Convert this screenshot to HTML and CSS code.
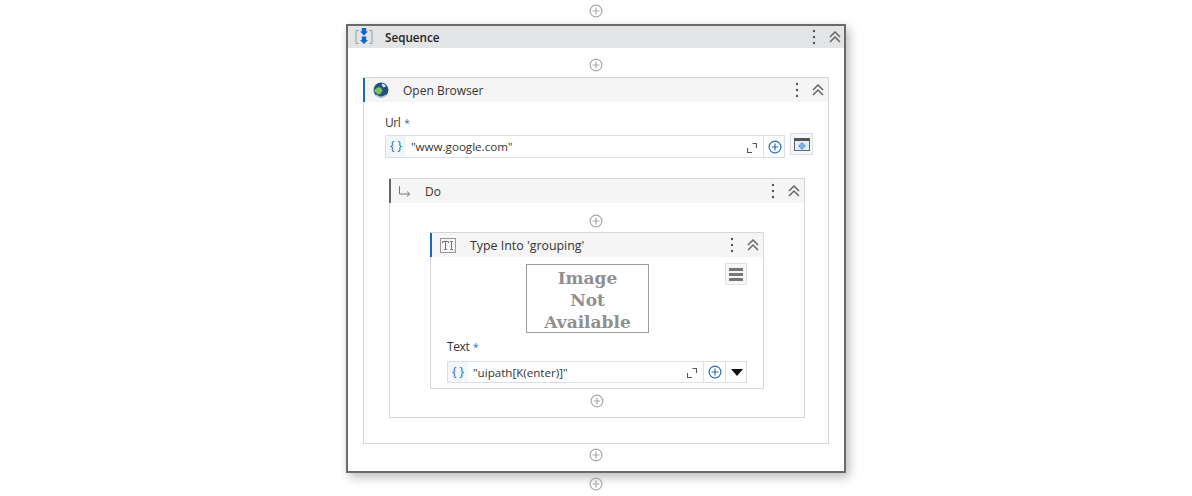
FILE: index.html
```html
<!DOCTYPE html>
<html lang="en">
<head>
    <meta charset="UTF-8">
    <meta name="viewport" content="width=device-width, initial-scale=1.0">
    <title>Sequence</title>
    <link rel="stylesheet" href="styles.css">
</head>
<body>
    <svg class="defs" width="0" height="0">
        <symbol id="add" viewBox="0 0 14 14">
            <circle cx="7" cy="7" r="5.9" fill="none" stroke="currentColor" stroke-width="1.2"/>
            <path d="M7 3.6v6.8M3.6 7h6.8" fill="none" stroke="currentColor" stroke-width="1.2"/>
        </symbol>
        <symbol id="dots" viewBox="0 0 4 16">
            <circle cx="2" cy="2" r="1.2" fill="currentColor"/>
            <circle cx="2" cy="8" r="1.2" fill="currentColor"/>
            <circle cx="2" cy="14" r="1.2" fill="currentColor"/>
        </symbol>
        <symbol id="collapse" viewBox="0 0 12 12">
            <path d="M1 6l5-5 5 5M1 11l5-5 5 5" fill="none" stroke="currentColor" stroke-width="1.5"/>
        </symbol>
        <symbol id="expand" viewBox="0 0 10 10">
            <path d="M.5 5v4.500H5M5.500 .5h4V5" fill="none" stroke="currentColor" stroke-width="1.100"/>
        </symbol>
    </svg>

    <div class="canvas">
        <svg class="add"><use href="#add"/></svg>

        <div class="sequence">
            <div class="head head-seq">
                <svg class="icon" width="18" height="18" viewBox="0 0 18 18">
                    <path d="M3.500 2.500H1v13h2.500M14.500 2.500H17v13h-2.500" fill="none" stroke="#999" stroke-width="1"/>
                    <path d="M6.800 0h4.400v3.500H13L9 7.500 5 3.500h1.800z" fill="#0f66c4"/>
                    <path d="M6.800 8.500h4.400V12H13l-4 4-4-4h1.800z" fill="#0f66c4"/>
                </svg>
                <b class="title">Sequence</b>
                <svg class="dots"><use href="#dots"/></svg>
                <svg class="chevrons"><use href="#collapse"/></svg>
            </div>
            <div class="seq-body">
                <svg class="add add-seq"><use href="#add"/></svg>

                <div class="activity blue">
                    <div class="head head-open">
                        <svg class="icon" width="16" height="16" viewBox="0 0 16 16">
                            <circle cx="8" cy="8" r="7.500" fill="#23527f"/>
                            <path d="M1 8.500c2-2.500 3-3 5-3.500 2 .5 3 2 3.500 3.500-.5 2-2 3.500-3.500 4-2-.5-4-2-5-4z" fill="#7cc05a"/>
                            <path d="M9.500 1.500c2 .5 3 1.500 3.500 3l-2.500 1-2-2.500z" fill="#cfe2ee"/>
                            <path d="M3 13c3 2.500 7 2.500 10 0" fill="none" stroke="#a9c9dc" stroke-width="1.200"/>
                        </svg>
                        <span class="title">Open Browser</span>
                        <svg class="dots"><use href="#dots"/></svg>
                        <svg class="chevrons"><use href="#collapse"/></svg>
                    </div>
                    <div class="open-body">
                        <div class="label">Url <span class="req">*</span></div>
                        <div class="field-row">
                            <div class="field field-url">
                                <span class="curly">{ }</span>
                                <span class="value">"www.google.com"</span>
                                <svg class="expand"><use href="#expand"/></svg>
                                <span class="seg"><svg class="seg-add"><use href="#add"/></svg></span>
                            </div>
                            <div class="browser-btn">
                                <svg width="16" height="13" viewBox="0 0 16 13">
                                    <rect x=".5" y=".5" width="15" height="12" fill="#e4eef8" stroke="#666"/>
                                    <rect x="0" y="0" width="16" height="3" fill="#555"/>
                                    <circle cx="8" cy="8" r="2.500" fill="none" stroke="#4a90d9"/>
                                    <path d="M8 4.500v7M4.500 8h7" stroke="#4a90d9" stroke-width="1"/>
                                </svg>
                            </div>
                        </div>

                        <div class="activity gray do">
                            <div class="head head-do">
                                <svg class="icon" width="14" height="14" viewBox="0 0 14 14">
                                    <path d="M1.500 2v8h10M9 7.500l2.800 2.500L9 12.500" fill="none" stroke="#777" stroke-width="1"/>
                                </svg>
                                <span class="title">Do</span>
                                <svg class="dots"><use href="#dots"/></svg>
                                <svg class="chevrons"><use href="#collapse"/></svg>
                            </div>
                            <div class="do-body">
                                <svg class="add add-do"><use href="#add"/></svg>

                                <div class="activity blue type">
                                    <div class="head head-type">
                                        <svg class="icon" width="16" height="15" viewBox="0 0 16 15">
                                            <rect x=".5" y=".5" width="15" height="14" fill="none" stroke="#999"/>
                                            <path d="M2.500 5V3.500h6V5M5.500 3.500v8M4 11.500h3M11.500 3.500v8M10 3.500h3M10 11.500h3" fill="none" stroke="#777"/>
                                        </svg>
                                        <span class="title">Type Into 'grouping'</span>
                                        <svg class="dots"><use href="#dots"/></svg>
                                        <svg class="chevrons"><use href="#collapse"/></svg>
                                    </div>
                                    <div class="type-body">
                                        <div class="preview-row">
                                            <div class="no-image">Image<br>Not<br>Available</div>
                                            <div class="menu-btn"><i></i><i></i><i></i></div>
                                        </div>
                                        <div class="label label-text">Text <span class="req">*</span></div>
                                        <div class="field field-text">
                                            <span class="curly">{ }</span>
                                            <span class="value">"uipath[K(enter)]"</span>
                                            <svg class="expand"><use href="#expand"/></svg>
                                            <span class="seg seg-wide"><svg class="seg-add"><use href="#add"/></svg></span>
                                            <span class="seg"><span class="arrow"></span></span>
                                        </div>
                                    </div>
                                </div>

                                <svg class="add add-do-end"><use href="#add"/></svg>
                            </div>
                        </div>
                    </div>
                </div>

                <svg class="add add-seq-end"><use href="#add"/></svg>
            </div>
        </div>

        <svg class="add add-end"><use href="#add"/></svg>
    </div>
</body>
</html>
```

FILE: styles.css
```css
* { box-sizing: border-box; }

body
{
    margin: 0;
    height: 496px;
    overflow: hidden;
    background: #fff;
    font-family: "Open Sans", "Noto Sans", sans-serif;
    font-size: 12px;
    color: #333;
}
.defs { display: block; height: 0; }

.canvas
{
    display: flex;
    flex-direction: column;
    align-items: center;
    padding-top: 4px;
}

/* little round plus between the activities */
.add
{
    display: block;
    flex: none;
    width: 14px;
    height: 14px;
    color: #a9a9a9;
}
.add-seq { margin: 10px auto 5px; }
.add-seq-end { margin: 4px auto 0; }
.add-do { margin: 11px 0 4px 159px; }
.add-do-end { margin: 5px 0 0 160px; }
.add-end { margin-top: 4px; }

.sequence
{
    width: 500px;
    height: 449px;
    margin-top: 6px;
    border: 2px solid #6a6a6a;
    box-shadow: 3px 4px 10px rgba(0,0,0,.28);
    background: #fff;
}
.seq-body { padding: 0 15px; }

.activity { border: 1px solid #d4d6d7; }

/* coloured bar sits on the header only, 2px over the 1px border */
.activity > .head { margin-left: -1px; }
.blue > .head { box-shadow: inset 2px 0 0 #1a68b8; }
.gray > .head { box-shadow: inset 2px 0 0 #666; }

.head
{
    display: flex;
    align-items: center;
    height: 24px;
    padding-right: 4px;
    background: #f5f5f5;
    font-size: 12px;
    color: #333;
}
.head-seq { height: 22px; padding: 0 3px 0 7px; background: #e3e4e6; }
.head-open { padding-left: 10px; }
.head-do { padding-left: 9px; }
.head-type { padding-left: 10px; }
.head-seq .title { margin-left: 12px; font-size: 11.700px; font-weight: 600; color: #222; }
.head-open .title { margin-left: 14px; }
.head-do .title { margin-left: 13px; }
.head-type .title { margin-left: 14px; font-size: 12.400px; }

.icon { flex: none; display: block; }
.title { flex: 1; }
.dots
{
    flex: none;
    width: 4px;
    height: 16px;
    margin-right: 13px;
    color: #555;
}
.chevrons
{
    flex: none;
    width: 12px;
    height: 12px;
    color: #666;
}

.open-body { padding: 13px 0 0 21px; height: 341px; }

.label { height: 16px; line-height: 16px; margin-bottom: 4px; color: #333; letter-spacing: -.4px; }
.req { margin-left: 1px; font-size: 10px; color: #2a6fb5; }

.field-row { display: flex; align-items: flex-start; gap: 5px; }
.field
{
    display: flex;
    align-items: center;
    height: 23px;
    border: 1px solid #d8dfe6;
    font-size: 11.600px;
    color: #333;
}
.field-url { width: 400px; }
.field-text { width: 300px; height: 22px; }
.curly
{
    flex: none;
    display: block;
    width: 20px;
    height: 100%;
    background: #f3f6f9;
    color: #1a68b8;
    text-align: center;
    font-size: 12px;
    line-height: 19px;
}
.value { flex: 1; margin-left: 5px; white-space: nowrap; }
.expand
{
    flex: none;
    width: 10px;
    height: 10px;
    margin: 2px 6px 0 0;
    color: #555;
}
.seg
{
    flex: none;
    display: flex;
    align-items: center;
    justify-content: center;
    width: 21px;
    height: 100%;
    padding-left: 1px;
    border-left: 1px solid #d8dfe6;
}
.seg-wide { width: 22px; }
.seg-add { display: block; width: 14px; height: 14px; color: #2a6fb5; }
.arrow
{
    width: 0;
    height: 0;
    border-left: 6px solid transparent;
    border-right: 6px solid transparent;
    border-top: 7px solid #111;
}
.browser-btn
{
    display: flex;
    align-items: center;
    justify-content: center;
    width: 23px;
    height: 22px;
    margin-top: -2px;
    border: 1px solid #d8dfe6;
    background: #f6f7f8;
}

.do { width: 416px; height: 240px; margin: 20px 0 0 4px; }
.do-body { padding-left: 40px; }

.type { width: 334px; height: 157px; }
.type-body { padding: 7px 16px 0 16px; }
.preview-row { display: flex; align-items: flex-start; }
.no-image
{
    width: 123px;
    height: 69px;
    margin-left: 79px;
    padding-top: 2px;
    border: 1px solid #9c9c9c;
    overflow: hidden;
    text-align: center;
    font-family: "DejaVu Serif", "Liberation Serif", serif;
    font-weight: bold;
    font-size: 17px;
    line-height: 22px;
    color: #8f8f8f;
}
.menu-btn
{
    display: flex;
    flex-direction: column;
    align-items: center;
    justify-content: center;
    gap: 2px;
    width: 22px;
    height: 22px;
    margin: -1px 0 0 76px;
    border: 1px solid #dfe2e5;
    background: #f6f7f8;
}
.menu-btn i { display: block; width: 14px; height: 3px; background: #777; }
.label-text { margin: 6px 0 6px; }
```
